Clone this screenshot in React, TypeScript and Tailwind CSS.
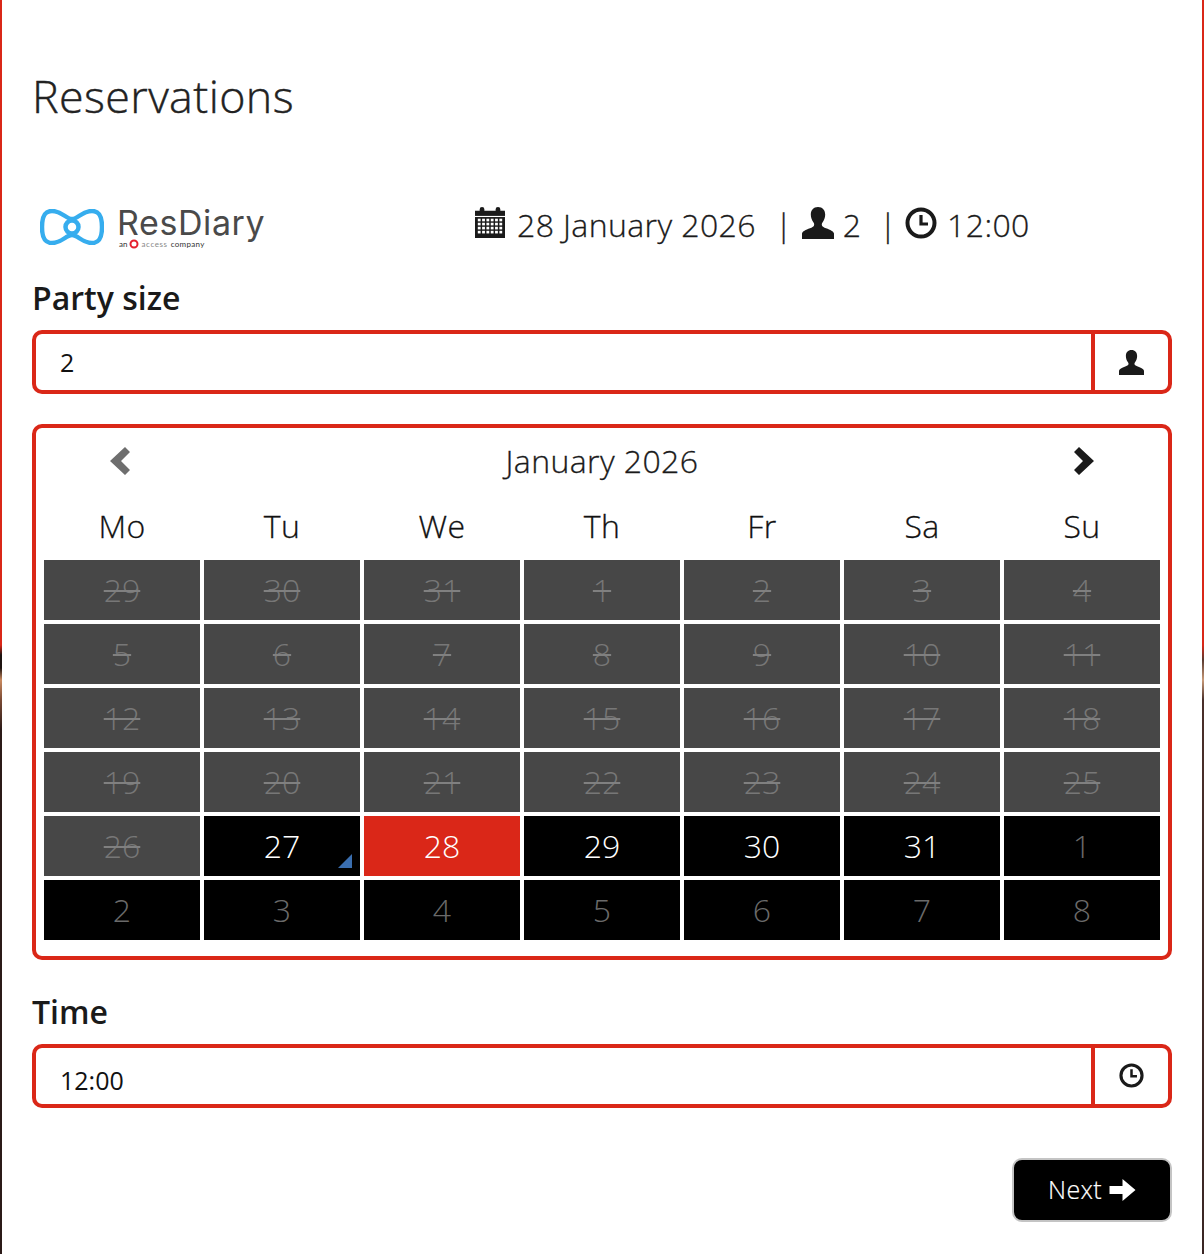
const weeks: [string, string][][] = [
  ["29","30","31","1","2","3","4"].map((d) => [d, "past"]),
  ["5","6","7","8","9","10","11"].map((d) => [d, "past"]),
  ["12","13","14","15","16","17","18"].map((d) => [d, "past"]),
  ["19","20","21","22","23","24","25"].map((d) => [d, "past"]),
  [["26","past"],["27","today"],["28","selected"],["29","open"],["30","open"],["31","open"],["1","other"]],
  ["2","3","4","5","6","7","8"].map((d) => [d, "other"]),
] as [string, string][][];

const days = ["Mo", "Tu", "We", "Th", "Fr", "Sa", "Su"];

function UserIcon({ className }: { className: string }) {
  return (
    <svg viewBox="0 0 32 32" className={className} fill="currentColor">
      <path d="M16 0c-4.600 0-7.200 3.200-7.200 7.600 0 2.900 1.100 6 2.700 8 .8 1 .9 2.400.3 3.400-.5.8-1.600 1.400-3.800 2.200C3.600 22.800.4 24.300 0 26.500V32h32v-5.500c-.4-2.200-3.600-3.700-8-5.300-2.200-.8-3.300-1.400-3.800-2.200-.6-1-.5-2.400.3-3.400 1.600-2 2.700-5.100 2.700-8C23.200 3.200 20.600 0 16 0z" />
    </svg>
  );
}

function ClockIcon({ className }: { className: string }) {
  return (
    <svg viewBox="0 0 32 32" className={className} fill="none" stroke="currentColor">
      <circle cx="16" cy="16" r="13.500" strokeWidth="4" />
      <path d="M16 8v9h7" strokeWidth="3.200" />
    </svg>
  );
}

function CalendarIcon({ className }: { className: string }) {
  const cells: React.ReactElement[] = [];
  for (let r = 0; r < 4; r++) {
    for (let c = 0; c < 6; c++) {
      cells.push(<rect key={`${r}-${c}`} x={3 + c * 4.600} y={13.500 + r * 4.300} width="3" height="2.800" fill="#fff" />);
    }
  }
  return (
    <svg viewBox="0 0 32 34" className={className}>
      <path fill="currentColor" d="M0 5h5V3.500a2.500 2.500 0 0 1 5 0V5h12V3.500a2.500 2.500 0 0 1 5 0V5h5v29H0z" />
      <rect x="0" y="10.500" width="32" height="1.200" fill="#fff" />
      {cells}
    </svg>
  );
}

function Cell({ d, kind }: { d: string; kind: string }) {
  const bg =
    kind === "past" ? "bg-[#474747] text-[#777777] line-through decoration-[1.500px] decoration-[#808080]" :
    kind === "selected" ? "bg-[#da2718] text-white" :
    kind === "other" ? "bg-black text-[#6a6a6a]" : "bg-black text-white";
  return (
    <div className={`relative h-[60px] flex items-center justify-center text-[32px] font-light leading-none ${bg}`}>
      {d}
      {kind === "today" && (
        <svg viewBox="0 0 14 14" className="absolute right-2 bottom-2 w-[14px] h-[14px]">
          <path d="M14 0v14H0z" fill="#3a6eaf" />
        </svg>
      )}
    </div>
  );
}

export default function App() {
  return (
    <div className="relative w-[1204px] h-[1254px] bg-white overflow-hidden px-8 text-[#111111] font-['Open_Sans',sans-serif]">
      <div className="absolute left-0 top-0 w-[2px] h-full bg-[linear-gradient(#da2718_0,#da2718_645px,#1d1310_655px,#1d1310_668px,#c98a60_680px,#7a4a34_700px,#2b1a18_730px,#2b1a18_1254px)]" />
      <div className="absolute right-0 top-0 w-[2px] h-full bg-[linear-gradient(#da2718_0,#da2718_645px,#5a3a30_660px,#c99a78_680px,#4a2f2a_700px,#3a2624_1254px)]" />

      <h1 className="pt-[67px] text-[44.800px] leading-[58px] font-light tracking-[0.4px] [-webkit-text-stroke:0.4px_#222222] text-[#222222]">Reservations</h1>

      <div className="mt-[76px] flex items-start h-[52px]">
        <div className="w-[442px] pl-2 flex items-center gap-[14px] pt-[4px]">
          <svg viewBox="0 0 64 36" className="w-[64px] h-[36px]" fill="none" stroke="#36adee" strokeWidth="4.500">
            <path d="M32 10C26 10 22 2 12 2 5 2 2 7 2 18s3 16 10 16c10 0 14-8 20-8s10 8 20 8c7 0 10-5 10-16S59 2 52 2C42 2 38 10 32 10z" />
            <circle cx="32" cy="18" r="6.500" />
          </svg>
          <div className="flex flex-col -ml-px pt-[3px] font-['Lato',sans-serif]">
            <span className="text-[34px] leading-[30px] tracking-[0.6px] text-[#4a4a4a] font-['Inter',sans-serif]">ResDiary</span>
            <span className="mt-px flex items-center text-[8px] leading-[8px] text-[#333333] ml-0.5 gap-[2px]">
              <span>an</span>
              <svg viewBox="0 0 10 10" className="w-[10px] h-[10px]" fill="none" stroke="#e5202e" strokeWidth="2"><circle cx="5" cy="5" r="3.500" /></svg>
              <span className="text-[#888888] tracking-[0.6px]">access</span>
              <span className="ml-px tracking-[0.3px]">company</span>
            </span>
          </div>
        </div>
        <div className="flex items-center text-[32px] font-light tracking-[0.4px] [-webkit-text-stroke:0.3px_#1a1a1a] leading-[44px] mt-[2px] text-[#1a1a1a]">
          <CalendarIcon className="w-[30px] h-[32px] ml-px mr-[12px] -mt-1.5 text-[#1a1a1a]" />
          <span>28 January 2026</span>
          <span className="ml-[19px]">|</span>
          <UserIcon className="w-[32px] h-[32px] ml-[9px] mr-[9px] -mt-1 text-[#1a1a1a]" />
          <span>2</span>
          <span className="ml-[18px]">|</span>
          <ClockIcon className="w-[32px] h-[32px] ml-[8px] mr-[10px] -mt-1" />
          <span>12:00</span>
        </div>
      </div>

      <div className="mt-[23px] text-[32px] leading-[44px] font-semibold text-[#1a1a1a]">Party size</div>
      <div className="mt-[10px] h-16 border-4 border-[#da2718] rounded-[10px] flex items-stretch">
        <div className="flex-1 pl-6 pt-0.5 flex items-center text-[25px]">2</div>
        <div className="w-[77px] border-l-4 border-[#da2718] flex items-center justify-center">
          <UserIcon className="w-[25px] h-[25px] text-[#1a1a1a]" />
        </div>
      </div>

      <div className="mt-[30px] border-4 border-[#da2718] rounded-[10px] h-[536px] px-2">
        <div className="h-[68px] pb-[2px] flex items-center justify-between px-[64px]">
          <svg viewBox="0 0 22 30" className="w-[22px] h-[30px]"><path d="M17 1l5 5-9 9 9 9-5 5L2 15z" fill="#6e6e6e" /></svg>
          <span className="text-[32px] font-light tracking-[0.4px] [-webkit-text-stroke:0.3px_#1a1a1a] leading-none text-[#1a1a1a]">January 2026</span>
          <svg viewBox="0 0 22 30" className="w-[22px] h-[30px]"><path d="M5 1L0 6l9 9-9 9 5 5 15-14z" fill="#1a1a1a" /></svg>
        </div>
        <div className="grid grid-cols-7 gap-x-1 h-[64px] pb-[4px] text-[32px] font-light tracking-[0.4px] [-webkit-text-stroke:0.3px_#111111] leading-none text-[#111111]">
          {days.map((d) => <div key={d} className="flex items-center justify-center">{d}</div>)}
        </div>
        <div className="grid grid-cols-7 gap-1">
          {weeks.flat().map(([d, kind], i) => <Cell key={i} d={d} kind={kind} />)}
        </div>
      </div>

      <div className="mt-[30px] text-[32px] leading-[44px] font-semibold text-[#1a1a1a]">Time</div>
      <div className="mt-[10px] h-16 border-4 border-[#da2718] rounded-[10px] flex items-stretch">
        <div className="flex-1 pl-6 pt-[10px] flex items-center text-[25px]">12:00</div>
        <div className="w-[77px] border-l-4 border-[#da2718] flex items-center justify-center">
          <ClockIcon className="w-[25px] h-[25px] text-[#1a1a1a] -mt-0.5" />
        </div>
      </div>

      <div className="mt-[50px] flex justify-end">
        <button className="w-[160px] h-[64px] bg-black border-2 border-[#c4c4c4] rounded-[10px] text-white text-[25px] font-light tracking-[0.3px] [-webkit-text-stroke:0.2px_#ffffff] flex items-center justify-center gap-[7px]">
          Next
          <svg viewBox="0 0 26 22" className="w-[27px] h-[22px]"><path d="M0 7h13V0l13 11-13 11v-7H0z" fill="#fff" /></svg>
        </button>
      </div>
    </div>
  );
}
